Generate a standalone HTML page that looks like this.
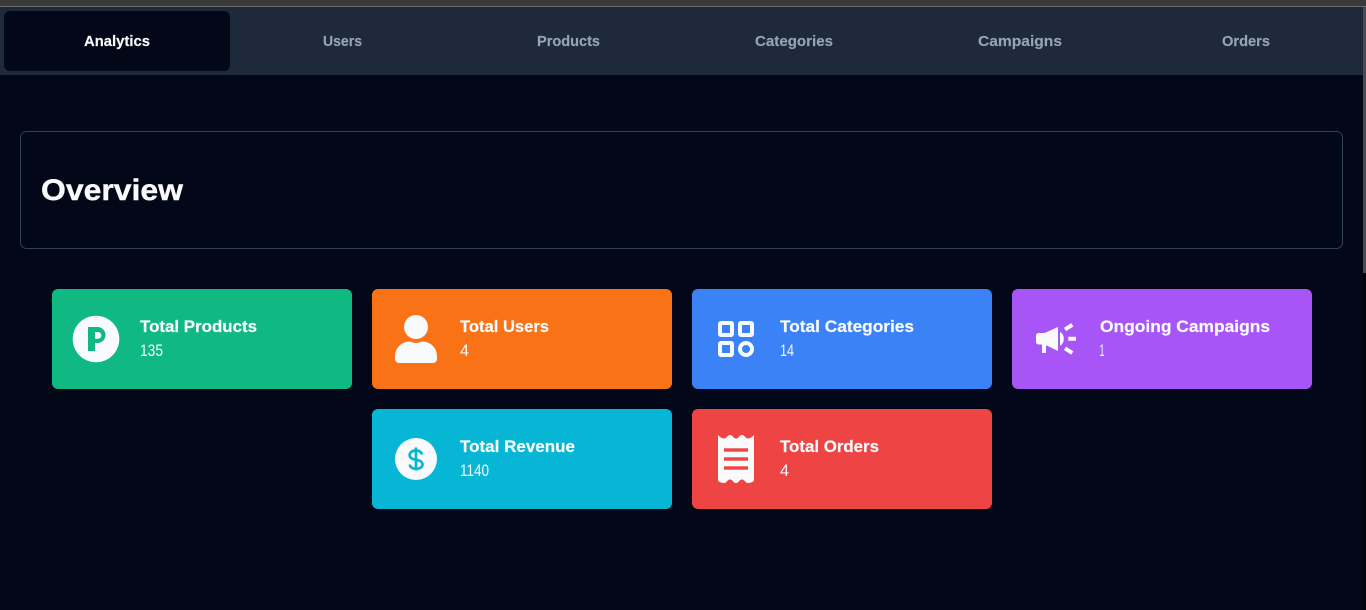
<!DOCTYPE html>
<html lang="en">
<head>
<meta charset="utf-8">
<title>Overview</title>
<style>
html,body{margin:0;padding:0;width:1366px;height:610px;overflow:hidden;background:#020817}
svg{display:block;position:absolute;left:0;top:0}
text{font-family:"Liberation Sans",sans-serif}
.nav{font-size:14.500px;font-weight:700;fill:#94a3b8;stroke:#94a3b8;stroke-width:.15px}
.t{font-size:17px;font-weight:700;fill:#f8fafc;stroke:#f8fafc;stroke-width:.2px}
.v{font-size:17px;font-weight:400;fill:#f8fafc}
</style>
</head>
<body>
<svg width="1366" height="610" viewBox="0 0 1366 610" xmlns="http://www.w3.org/2000/svg">
  <rect width="1366" height="610" fill="#020817"/>
  <rect width="1366" height="6" fill="#3a3a3a"/>
  <rect y="6" width="1366" height="1" fill="#6e6e6e"/>
  <rect y="7" width="1366" height="68" fill="#1e293b"/>
  <rect x="1363" y="7" width="3" height="266" fill="#4b4b4b"/>
  <rect x="1363" y="273" width="3" height="337" fill="#050505"/>
  <rect x="4" y="11" width="226" height="60" rx="6" fill="#020817"/>

  <text x="84" y="46" textLength="66" lengthAdjust="spacingAndGlyphs" class="nav" style="fill:#f8fafc;stroke:#f8fafc">Analytics</text>
  <text x="323" y="46" textLength="39" lengthAdjust="spacingAndGlyphs" class="nav">Users</text>
  <text x="537" y="46" textLength="63" lengthAdjust="spacingAndGlyphs" class="nav">Products</text>
  <text x="755" y="46" textLength="78" lengthAdjust="spacingAndGlyphs" class="nav">Categories</text>
  <text x="978" y="46" textLength="84" lengthAdjust="spacingAndGlyphs" class="nav">Campaigns</text>
  <text x="1222" y="46" textLength="48" lengthAdjust="spacingAndGlyphs" class="nav">Orders</text>

  <rect x="20.500" y="131.500" width="1322" height="117" rx="6" fill="none" stroke="#334155"/>
  <text x="41" y="200" textLength="142" lengthAdjust="spacingAndGlyphs" font-size="30" font-weight="700" fill="#f8fafc" stroke="#f8fafc" stroke-width=".4">Overview</text>

  <!-- Total Products -->
  <rect x="52" y="289" width="300" height="100" rx="6" fill="#10b981"/>
  <circle cx="96" cy="339" r="23.300" fill="#f8fafc"/>
  <path fill="#10b981" fill-rule="evenodd" d="M88 327h9.500a8 8 0 0 1 0 16H95v8h-7zM95 332v6.700h3a3.350 3.350 0 0 0 0-6.700z"/>
  <text x="140" y="332" textLength="117" lengthAdjust="spacingAndGlyphs" class="t">Total Products</text>
  <text x="140" y="356" textLength="23" lengthAdjust="spacingAndGlyphs" class="v">135</text>

  <!-- Total Users -->
  <rect x="372" y="289" width="300" height="100" rx="6" fill="#f97316"/>
  <circle cx="416" cy="327" r="12" fill="#f8fafc"/>
  <path fill="#f8fafc" d="M395 356a14.500 14.500 0 0 1 14.500-14.500c1.800 0 3.200 1.500 6.500 1.500s4.700-1.500 6.500-1.500A14.500 14.500 0 0 1 437 356v3a4 4 0 0 1-4 4h-34a4 4 0 0 1-4-4z"/>
  <text x="460" y="332" textLength="89" lengthAdjust="spacingAndGlyphs" class="t">Total Users</text>
  <text x="460" y="356" textLength="9" lengthAdjust="spacingAndGlyphs" class="v">4</text>

  <!-- Total Categories -->
  <rect x="692" y="289" width="300" height="100" rx="6" fill="#3b82f6"/>
  <g fill="none" stroke="#f8fafc" stroke-width="4">
    <rect x="720" y="323" width="12" height="12" rx="1"/>
    <rect x="740" y="323" width="12" height="12" rx="1"/>
    <rect x="720" y="343" width="12" height="12" rx="1"/>
    <circle cx="746" cy="349" r="6"/>
  </g>
  <text x="780" y="332" textLength="134" lengthAdjust="spacingAndGlyphs" class="t">Total Categories</text>
  <text x="780" y="356" textLength="14" lengthAdjust="spacingAndGlyphs" class="v">14</text>

  <!-- Ongoing Campaigns -->
  <rect x="1012" y="289" width="300" height="100" rx="6" fill="#a855f7"/>
  <path fill="#f8fafc" d="M1038.500 333h6L1058 327v24l-13.500-6.500h-6a2.500 2.500 0 0 1-2.500-2.500v-6.500a2.500 2.500 0 0 1 2.500-2.500z"/>
  <rect x="1042" y="344" width="4" height="9" fill="#f8fafc"/>
  <path fill="#f8fafc" d="M1060 331.700c2.800 1.800 3.800 4.300 3.800 7.100s-1 5.300-3.800 7.100z"/>
  <path fill="none" stroke="#f8fafc" stroke-width="4" d="M1065 329.500l7.300-4.700M1068.300 338.700h7.700M1065 348.300l7.300 4.700"/>
  <text x="1100" y="332" textLength="170" lengthAdjust="spacingAndGlyphs" class="t">Ongoing Campaigns</text>
  <text x="1099.500" y="356" textLength="5" lengthAdjust="spacingAndGlyphs" class="v">1</text>

  <!-- Total Revenue -->
  <rect x="372" y="409" width="300" height="100" rx="6" fill="#06b6d4"/>
  <circle cx="416" cy="459" r="21" fill="#f8fafc"/>
  <path fill="none" stroke="#06b6d4" stroke-width="2.700" d="M422 454.500c-.6-2.600-3-4-6-4-3.800 0-6.300 2-6.300 4.500 0 3 2.500 4 6.300 4.700 3.900.8 6.500 1.900 6.500 4.700 0 2.700-2.600 4.400-6.500 4.400-3.200 0-5.700-1.400-6.400-4.200M416 447.500v23"/>
  <text x="460" y="452" textLength="115" lengthAdjust="spacingAndGlyphs" class="t">Total Revenue</text>
  <text x="460" y="476" textLength="29" lengthAdjust="spacingAndGlyphs" class="v">1140</text>

  <!-- Total Orders -->
  <rect x="692" y="409" width="300" height="100" rx="6" fill="#ef4444"/>
  <path fill="#f8fafc" d="M718 435Q721 438.500 724 438.500C727 438.500 727 435 730 435C733 435 733 438.500 736 438.500C739 438.500 739 435 742 435C745 435 745 438.500 748 438.500Q751 438.500 754 435V481Q751 483 748 483C745 483 745 479.500 742 479.500C739 479.500 739 483 736 483C733 483 733 479.500 730 479.500C727 479.500 727 483 724 483Q721 483 718 481z"/>
  <g fill="#ef4444">
    <rect x="724" y="448.300" width="24" height="3.400"/>
    <rect x="724" y="457.300" width="24" height="3.400"/>
    <rect x="724" y="466.300" width="24" height="3.400"/>
  </g>
  <text x="780" y="452" textLength="99" lengthAdjust="spacingAndGlyphs" class="t">Total Orders</text>
  <text x="780" y="476" textLength="9" lengthAdjust="spacingAndGlyphs" class="v">4</text>
</svg>
</body>
</html>
